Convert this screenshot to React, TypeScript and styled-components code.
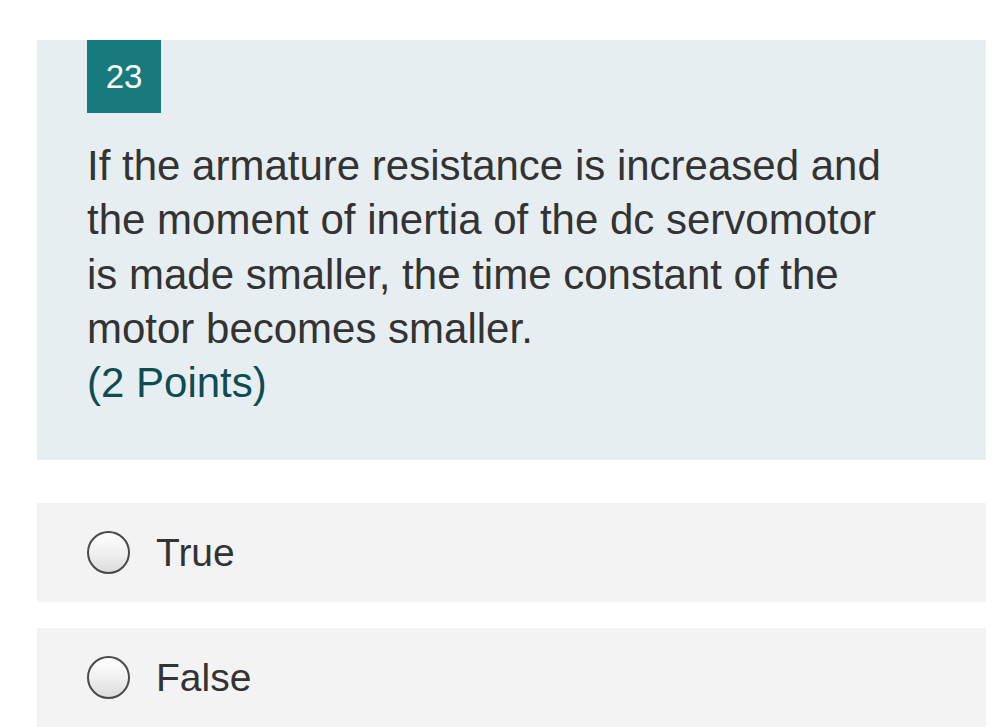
import React from "react";
import styled, { createGlobalStyle } from "styled-components";

const Global = createGlobalStyle`
  html, body { margin: 0; padding: 0; background: #ffffff; }
  body { font-family: "Liberation Sans", Arial, Helvetica, sans-serif; }
`;

const Page = styled.div`
  padding: 40px 9px 0 37px;
  display: flex;
  flex-direction: column;
`;

const QuestionCard = styled.section`
  background: #e6eef2;
  padding: 0 50px 50px 50px;
  display: flex;
  flex-direction: column;
  align-items: flex-start;
`;

const Badge = styled.div`
  width: 74px;
  height: 73px;
  background: #177a7c;
  color: #ffffff;
  font-size: 33px;
  display: flex;
  align-items: center;
  justify-content: center;
`;

const QuestionText = styled.p`
  margin: 26px 0 0 0;
  font-size: 42px;
  line-height: 54.25px;
  color: #333333;
  max-width: 810px;
`;

const Points = styled.span`
  display: block;
  color: #0e4c52;
`;

const Options = styled.div`
  margin-top: 43px;
  display: flex;
  flex-direction: column;
  gap: 26px;
`;

const OptionRow = styled.label`
  background: #f3f3f3;
  height: 99px;
  display: flex;
  align-items: center;
  padding-left: 50px;
  gap: 26px;
  cursor: pointer;
`;

const Radio = styled.span`
  width: 39px;
  height: 39px;
  border-radius: 50%;
  border: 2.5px solid #4a4a4a;
  background: linear-gradient(180deg, #ffffff 0%, #f0f0f0 50%, #dcdcdc 100%);
  flex-shrink: 0;
`;

const OptionText = styled.span`
  font-size: 39px;
  color: #333333;
`;

export default function App() {
  return (
    <>
      <Global />
      <Page>
        <QuestionCard>
          <Badge>23</Badge>
          <QuestionText>
            If the armature resistance is increased and the moment of inertia of the dc servomotor is
            made smaller, the time constant of the motor becomes smaller.
            <Points>(2 Points)</Points>
          </QuestionText>
        </QuestionCard>
        <Options>
          <OptionRow>
            <Radio />
            <OptionText>True</OptionText>
          </OptionRow>
          <OptionRow>
            <Radio />
            <OptionText>False</OptionText>
          </OptionRow>
        </Options>
      </Page>
    </>
  );
}
